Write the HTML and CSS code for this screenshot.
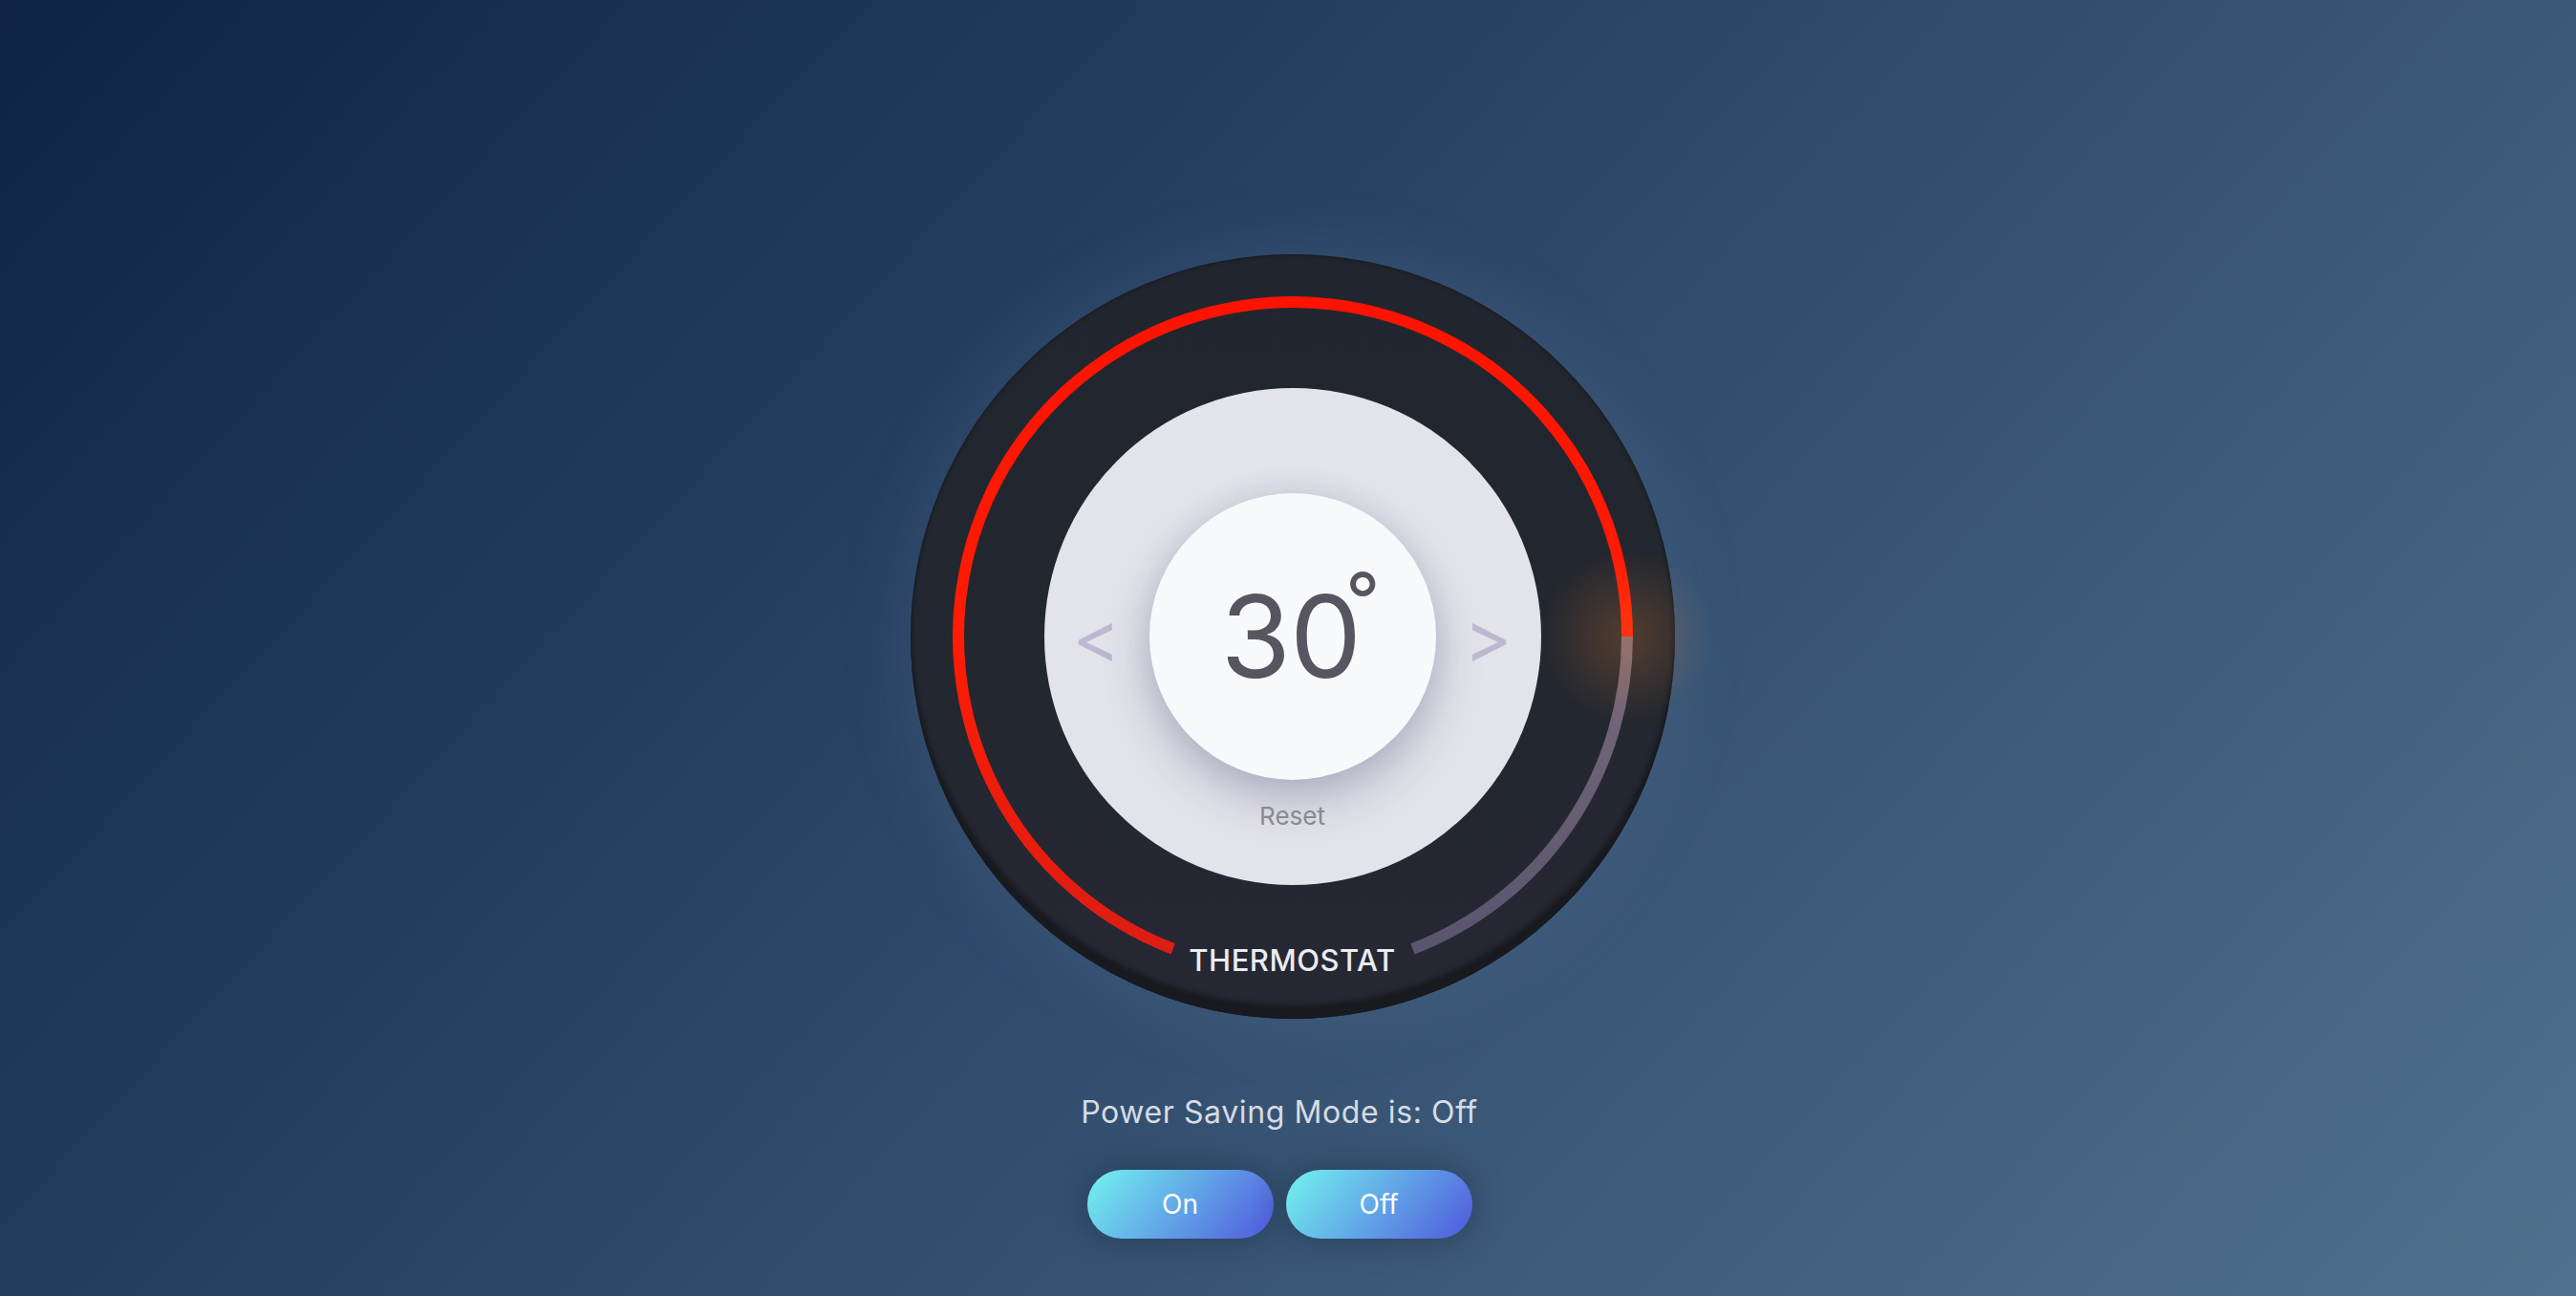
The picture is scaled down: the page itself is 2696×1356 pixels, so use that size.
FILE: index.html
```html
<!DOCTYPE html>
<html lang="en">
<head>
<meta charset="utf-8">
<title>Thermostat</title>
<link rel="stylesheet" href="styles.css">
</head>
<body>
<main class="page">
  <section class="thermostat">
    <div class="glow"></div>
    <svg class="gauge" viewBox="0 0 800 800" width="800" height="800" aria-hidden="true">
      <defs>
        <linearGradient id="redGrad" gradientUnits="userSpaceOnUse" x1="0" y1="40" x2="0" y2="740">
          <stop offset="0" stop-color="#ff1200"/>
          <stop offset="0.5" stop-color="#ff1c04"/>
          <stop offset="1" stop-color="#dc1d14"/>
        </linearGradient>
        <linearGradient id="grayGrad" gradientUnits="userSpaceOnUse" x1="0" y1="400" x2="0" y2="730">
          <stop offset="0" stop-color="#786a7a"/>
          <stop offset="1" stop-color="#5a5470"/>
        </linearGradient>
      </defs>
      <path d="M 274.6 726.8 A 350 350 0 1 1 750 400" fill="none" stroke="url(#redGrad)" stroke-width="12"/>
      <path d="M 750 400 A 350 350 0 0 1 525.4 726.8" fill="none" stroke="url(#grayGrad)" stroke-width="12"/>
    </svg>
    <div class="dial">
      <div class="dial-row">
        <button class="arrow" type="button">&lt;</button>
        <div class="knob">
          <span class="temp">30<span class="deg">°</span></span>
        </div>
        <button class="arrow" type="button">&gt;</button>
      </div>
      <button class="reset" type="button">Reset</button>
    </div>
    <div class="label">THERMOSTAT</div>
  </section>
  <p class="status">Power Saving Mode is: Off</p>
  <div class="buttons">
    <button class="pill" type="button">On</button>
    <button class="pill" type="button">Off</button>
  </div>
</main>
</body>
</html>
```

FILE: styles.css
```css
html, body {
  margin: 0;
  padding: 0;
}

body {
  min-height: 100vh;
  background: linear-gradient(133deg, #0e2345 0%, #2f4a6b 50%, #50728e 100%);
  font-family: "Inter", "Noto Sans", sans-serif;
  overflow: hidden;
}

.page {
  display: flex;
  flex-direction: column;
  align-items: center;
  padding-top: 266px;
}

.thermostat {
  position: relative;
  width: 800px;
  height: 800px;
  margin-left: 9px;
  border-radius: 50%;
  display: grid;
  place-items: center;
  background: linear-gradient(180deg, #21262e 0%, #23272f 55%, #262834 100%);
  box-shadow:
    inset 0 -15px 5px -1px #181a1f,
    inset 0 0 4px rgba(0, 0, 0, 0.5),
    0 0 70px 6px rgba(120, 145, 180, 0.16);
}

.thermostat > * {
  grid-area: 1 / 1;
}

.glow {
  position: absolute;
  left: 655px;
  top: 305px;
  width: 190px;
  height: 190px;
  border-radius: 50%;
  background: radial-gradient(circle, rgba(255, 140, 50, 0.22) 0%, rgba(255, 140, 50, 0.09) 40%, rgba(255, 140, 50, 0) 68%);
  pointer-events: none;
}

.gauge {
  display: block;
  width: 800px;
  height: 800px;
}

.dial {
  width: 520px;
  height: 520px;
  border-radius: 50%;
  background: #e3e3eb;
  display: flex;
  flex-direction: column;
  align-items: center;
  box-sizing: border-box;
  padding-top: 110px;
}

.dial-row {
  display: flex;
  align-items: center;
  gap: 35px;
}

.arrow {
  width: 40px;
  height: 60px;
  padding: 0;
  border: 0;
  background: none;
  font-family: "Inter", sans-serif;
  font-size: 76px;
  font-weight: 400;
  line-height: 60px;
  color: #bcb9ce;
  display: flex;
  align-items: center;
  justify-content: center;
  cursor: pointer;
}

.knob {
  width: 300px;
  height: 300px;
  border-radius: 50%;
  background: #f8f9fb;
  display: flex;
  align-items: center;
  justify-content: center;
  box-shadow:
    0 22px 50px rgba(80, 80, 120, 0.32),
    0 0 30px rgba(80, 80, 120, 0.12);
}

.temp {
  font-size: 119px;
  line-height: 1;
  color: #57555f;
  letter-spacing: -1px;
  margin-left: 16px;
}

.deg {
  font-size: 80px;
  line-height: 0;
  vertical-align: 52px;
  margin-left: -16px;
}

.reset {
  margin-top: 22px;
  padding: 0;
  border: 0;
  background: none;
  font-family: "Inter", sans-serif;
  font-size: 26px;
  color: #8a898f;
  cursor: pointer;
}

.label {
  align-self: end;
  margin-bottom: 43px;
  font-size: 31px;
  font-weight: 500;
  color: #ececf0;
  letter-spacing: 0.5px;
}

.status {
  margin: 79px 18px 0 0;
  font-size: 32px;
  line-height: 1.21;
  color: #d7dce4;
  letter-spacing: 0.6px;
}

.buttons {
  display: flex;
  gap: 13px;
  margin-top: 40px;
  margin-right: 18px;
}

.pill {
  width: 195px;
  height: 72px;
  border: 0;
  border-radius: 36px;
  background: linear-gradient(130deg, #73f4ee 0%, #62a6e8 50%, #4f57dc 100%);
  color: #ffffff;
  font-family: "Inter", sans-serif;
  font-size: 28px;
  font-weight: 400;
  box-shadow: 0 0 34px rgba(10, 20, 40, 0.35);
  cursor: pointer;
}
```
